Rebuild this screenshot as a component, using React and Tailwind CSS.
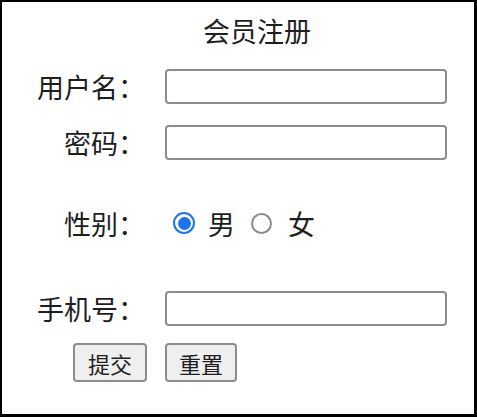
import React from 'react';

// Member registration form
function Field({ label, height, children }) {
  return (
    <div className={`flex items-center ${height}`}>
      <div className="w-[143px] text-right">{label}</div>
      <div className="ml-[20px] flex items-center">{children}</div>
    </div>
  );
}

function TextInput() {
  return (
    <input
      type="text"
      className="w-[282px] h-[35px] border-2 border-[#8c8c8c] rounded-[4px] bg-white outline-none"
    />
  );
}

function Radio({ checked }) {
  if (checked) {
    return (
      <span className="w-[22px] h-[22px] rounded-full border-[2px] border-[#1a74f0] bg-white flex items-center justify-center">
        <span className="w-[13px] h-[13px] rounded-full bg-[#1a74f0]" />
      </span>
    );
  }
  return <span className="block w-[21px] h-[21px] rounded-full border-[2px] border-[#8a8a8a] bg-white" />;
}

export default function App() {
  return (
    <div className="w-[477px] h-[417px] bg-white border-t-2 border-l-2 border-r-[3px] border-b-[3px] border-black text-[27px] leading-none text-[#1e1e1e] font-['Noto_Sans_CJK_SC','Noto_Sans',sans-serif]">
      <div className="h-[56px] flex items-center pl-[201px]">会员注册</div>

      <Field label="用户名：" height="h-[56px]">
        <TextInput />
      </Field>
      <Field label="密码：" height="h-[57px]">
        <TextInput />
      </Field>
      <Field label="性别：" height="h-[104px]">
        <div className="flex items-center">
          <span className="ml-[8px]"><Radio checked /></span>
          <span className="ml-[13px]">男</span>
          <span className="ml-[16px]"><Radio /></span>
          <span className="ml-[16px]">女</span>
        </div>
      </Field>
      <Field label="手机号：" height="h-[67px]">
        <TextInput />
      </Field>

      <div className="h-[41px] flex items-center pl-[71px] gap-[18px] text-[22px]">
        <button className="w-[74px] h-[39px] bg-[#efefef] border-2 border-[#8c8c8c] rounded-[4px] flex items-center justify-center">提交</button>
        <button className="w-[72px] h-[39px] bg-[#efefef] border-2 border-[#8c8c8c] rounded-[4px] flex items-center justify-center">重置</button>
      </div>
    </div>
  );
}
